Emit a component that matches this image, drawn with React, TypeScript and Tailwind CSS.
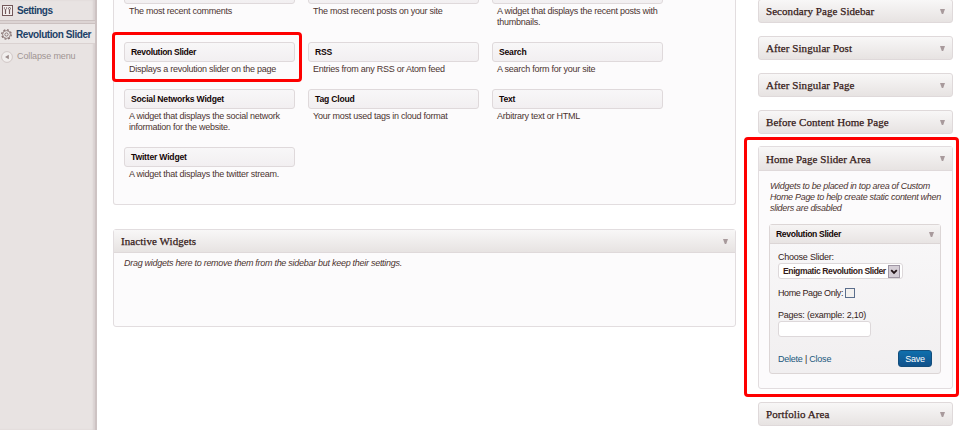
import type { ReactNode } from 'react';

function Arrow({ className = '' }: { className?: string }) {
  return (
    <svg className={`h-[5px] w-[5px] shrink-0 ${className}`} viewBox="0 0 5 5" aria-hidden="true">
      <path d="M0 0h5L3.2 5H1.8z" fill="#a89a9c" />
    </svg>
  );
}

function Heading({ children }: { children: ReactNode }) {
  return (
    <h3 className="whitespace-nowrap font-['Liberation_Serif',serif] text-[11px] leading-[14px] tracking-[0.06px] text-[#351a18] [-webkit-text-stroke:0.25px_#351a18]">
      {children}
    </h3>
  );
}

function AreaBar({ title }: { title: string }) {
  return (
    <div className="flex h-[24px] shrink-0 items-center justify-between rounded-[3px] border border-[#dfd9da] bg-linear-to-b from-[#f8f7f7] to-[#e7e3e2] pr-[7px] pl-[7px]">
      <Heading>{title}</Heading>
      <Arrow />
    </div>
  );
}

function Widget({ title, lines, titleClass = 'tracking-[-0.2px]' }: { title: string; lines: string[]; titleClass?: string }) {
  return (
    <div className="w-[171px]">
      <div
        className={`flex h-[20px] items-center rounded-[3px] border border-[#dfd9db] bg-linear-to-b from-[#f8f7f8] to-[#f2eff1] pl-[6px] text-[8.6px] font-bold whitespace-nowrap text-[#140606] ${titleClass}`}
      >
        {title}
      </div>
      <div className="mt-[2px] pl-[5px] text-[9px] leading-[11px] tracking-[-0.25px] whitespace-nowrap text-[#4c3430]">
        {lines.map((line) => (
          <div key={line}>{line}</div>
        ))}
      </div>
    </div>
  );
}

function SettingsIcon() {
  return (
    <svg className="h-[11px] w-[11px] shrink-0" viewBox="0 0 11 11" fill="none" stroke="#73585a" aria-hidden="true">
      <rect x=".5" y=".5" width="10" height="10" fill="#f4f0ef" />
      <path d="M3.5 4.5V9M7.5 5V9" strokeWidth="1.2" />
      <path d="M2.4 2.2v1.3c0 1.3 2.2 1.3 2.2 0V2.2" strokeWidth=".8" />
      <circle cx="7.5" cy="3.5" r="1" />
    </svg>
  );
}

function GearIcon() {
  return (
    <svg className="h-[11px] w-[11px] shrink-0" viewBox="0 0 11 11" fill="none" stroke="#7b6464" aria-hidden="true">
      <circle cx="5.5" cy="5.5" r="4.8" strokeWidth="1.1" strokeDasharray="1.9 1.87" />
      <circle cx="5.5" cy="5.5" r="3.9" strokeWidth=".8" />
      <circle cx="5.5" cy="5.5" r="1.6" strokeWidth=".8" />
    </svg>
  );
}

function Sidebar() {
  return (
    <nav className="flex w-[97px] shrink-0 flex-col border-r-2 border-[#cdc3c3] bg-[#e8e3e2] shadow-[inset_-2px_0_2px_#d8d0d0]">
      <div className="flex h-[20px] items-center gap-[4px] pt-[1px] pl-[2px] text-[10px] font-bold text-[#1c4167]">
        <SettingsIcon />
        <span className="tracking-[-0.5px]">Settings</span>
      </div>
      <div className="h-[4px] border-y border-[#cbc1c0] bg-[#dcd4d3]" />
      <div className="flex h-[20px] items-center gap-[4px] border-b border-[#dad2d1] bg-[#ebe7e6] pt-[1px] pl-[1px] text-[10px] font-bold whitespace-nowrap text-[#1c4167]">
        <GearIcon />
        <span className="tracking-[-0.42px]">Revolution Slider</span>
      </div>
      <div className="mt-[5px] flex h-[14px] items-center gap-[4px] pt-[1px] pl-[1px] text-[9px] whitespace-nowrap text-[#a09492]">
        <svg className="h-[12px] w-[12px] shrink-0" viewBox="0 0 12 12" aria-hidden="true">
          <circle cx="6" cy="6" r="5.4" fill="#f2efee" stroke="#c9bfbe" strokeWidth=".8" />
          <path d="M7.8 3.8v4.4L4 6z" fill="#9a8b8a" />
        </svg>
        <span className="tracking-[-0.12px]">Collapse menu</span>
      </div>
    </nav>
  );
}

function SliderForm() {
  return (
    <div className="mt-[10px] ml-[10px] h-[150px] w-[172px] rounded-[3px] border border-[#dcd6d6] bg-linear-to-b from-[#f9f8f9] to-[#f1eff0]">
      <div className="flex h-[19px] items-center justify-between border-b border-[#dcd6d6] bg-linear-to-b from-[#f6f4f4] to-[#e8e4e3] pr-[6px] pl-[6px] text-[8.6px] font-bold text-[#140606]">
        <span className="tracking-[-0.34px]">Revolution Slider</span>
        <Arrow />
      </div>
      <div className="pl-[8px] text-[9px] leading-[12px] tracking-[-0.23px] text-[#351c1a]">
        <div className="mt-[7px]">Choose Slider:</div>
        <div className="flex h-[16px] w-[125px] items-center justify-between rounded-[3px] border border-[#ddd8da] bg-white pr-[1px] pl-[4px] text-[8.6px] font-bold tracking-[-0.42px] whitespace-nowrap">
          <span>Enigmatic Revolution Slider</span>
          <svg className="mr-[1px] h-[13px] w-[12px] shrink-0" viewBox="0 0 12 13" aria-hidden="true">
            <rect x=".5" y=".5" width="11" height="12" fill="#d5ced6" stroke="#9f96a4" />
            <path d="M3.2 5.2 6 8l2.8-2.8" fill="none" stroke="#231518" strokeWidth="1.8" />
          </svg>
        </div>
        <div className="mt-[8px] flex h-[12px] items-center gap-[2px]">
          <span className="tracking-[-0.4px]">Home Page Only:</span>
          <span className="mb-[1px] h-[10px] w-[10px] border border-[#5b6e8c] bg-[#f3f1ef]" />
        </div>
        <div className="mt-[10px]">Pages: (example: 2,10)</div>
        <div className="h-[16px] w-[93px] rounded-[3px] border border-[#ddd8da] bg-white" />
        <div className="mt-[13px] flex items-center justify-between pr-[8px]">
          <span className="pt-[1px]">
            <a className="text-[#21587d]">Delete</a> | <a className="text-[#21587d]">Close</a>
          </span>
          <button className="h-[17px] w-[34px] rounded-[3px] border border-[#134e7c] bg-linear-to-b from-[#0e6fad] to-[#11518a] text-[9px] leading-[14px] text-white">
            Save
          </button>
        </div>
      </div>
    </div>
  );
}

export default function App() {
  return (
    <div className="relative flex h-[430px] w-[960px] overflow-hidden bg-white font-['Liberation_Sans',Arial,sans-serif]">
      <Sidebar />

      <main className="ml-[16px] w-[623px] shrink-0">
        <section className="flex h-[205px] flex-col rounded-b-[3px] border border-t-0 border-[#e2dddf] bg-[#fcfbfc] pl-[10px]">
          <div className="-mt-[16px] flex h-[58px] shrink-0 gap-[13px]">
            <Widget title="" lines={['The most recent comments']} />
            <Widget title="" lines={['The most recent posts on your site']} />
            <Widget title="" lines={['A widget that displays the recent posts with', 'thumbnails.']} />
          </div>
          <div className="flex h-[47px] shrink-0 gap-[13px]">
            <Widget
              title="Revolution Slider"
              titleClass="tracking-[-0.34px]"
              lines={['Displays a revolution slider on the page']}
            />
            <Widget title="RSS" lines={['Entries from any RSS or Atom feed']} />
            <Widget title="Search" lines={['A search form for your site']} />
          </div>
          <div className="flex h-[58px] shrink-0 gap-[13px]">
            <Widget title="Social Networks Widget" lines={['A widget that displays the social network', 'information for the website.']} />
            <Widget title="Tag Cloud" lines={['Your most used tags in cloud format']} />
            <Widget title="Text" lines={['Arbitrary text or HTML']} />
          </div>
          <Widget title="Twitter Widget" lines={['A widget that displays the twitter stream.']} />
        </section>

        <section className="mt-[24px] h-[98px] rounded-[3px] border border-[#e2dddf] bg-[#fcfbfc]">
          <div className="flex h-[23px] items-center justify-between border-b border-[#dfd9da] bg-linear-to-b from-[#f8f7f7] to-[#e7e3e2] pr-[7px] pl-[7px]">
            <Heading>Inactive Widgets</Heading>
            <Arrow />
          </div>
          <p className="mt-[4px] pl-[10px] text-[9px] leading-[12px] tracking-[-0.28px] text-[#4c3430] italic">
            Drag widgets here to remove them from the sidebar but keep their settings.
          </p>
        </section>
      </main>

      <aside className="-mt-[1px] ml-[22px] flex w-[195px] shrink-0 flex-col">
        <div className="flex flex-col gap-[13px]">
          <AreaBar title="Secondary Page Sidebar" />
          <AreaBar title="After Singular Post" />
          <AreaBar title="After Singular Page" />
          <AreaBar title="Before Content Home Page" />
        </div>
        <section className="mt-[12px] h-[243px] shrink-0 rounded-[3px] border border-[#e2dddf] bg-[#fcfbfc]">
          <div className="flex h-[24px] items-center justify-between border-b border-[#dfd9da] bg-linear-to-b from-[#f8f7f7] to-[#e7e3e2] px-[7px]">
            <Heading>Home Page Slider Area</Heading>
            <Arrow />
          </div>
          <p className="mt-[10px] pl-[11px] text-[9px] leading-[11px] tracking-[-0.3px] whitespace-nowrap text-[#4c3430] italic">
            Widgets to be placed in top area of Custom
            <br />
            Home Page to help create static content when
            <br />
            sliders are disabled
          </p>
          <SliderForm />
        </section>
        <div className="mt-[13px]">
          <AreaBar title="Portfolio Area" />
        </div>
      </aside>

      <div className="absolute top-[32px] left-[112px] h-[50px] w-[190px] rounded-[4px] border-3 border-[#fe0000]" />
      <div className="absolute top-[137px] left-[744px] h-[260px] w-[215px] rounded-[4px] border-3 border-[#fe0000]" />
    </div>
  );
}
